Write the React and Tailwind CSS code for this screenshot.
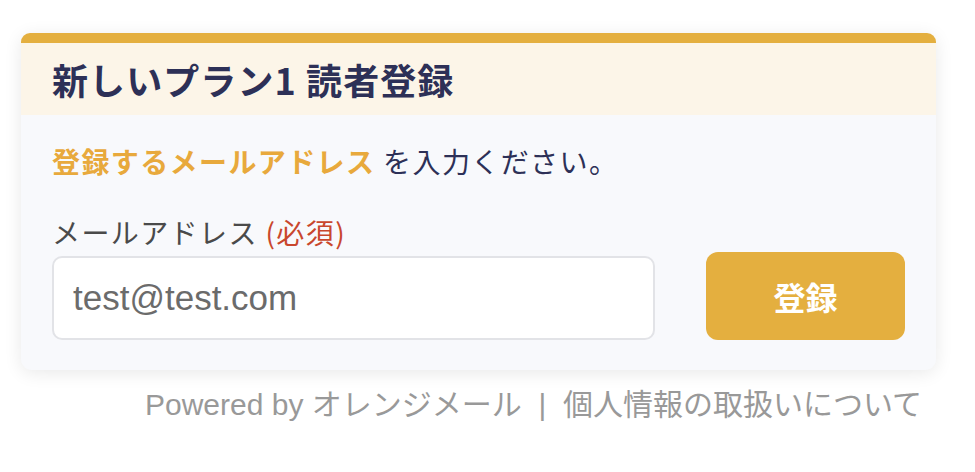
export default function App() {
  const jp = { fontFamily: '"Noto Sans CJK JP", "Noto Sans", sans-serif' };

  return (
    <div className="min-h-screen bg-white pl-[21px] pt-[33px]" style={jp}>
      <div className="w-[915px]">
        <div className="overflow-hidden rounded-t-[9px] rounded-b-[11px] bg-[#f8f9fc] shadow-[0_3px_18px_rgba(0,0,0,0.09)]">
          <div className="h-[10px] bg-[#e4af3f]" />
          <div className="flex h-[72px] items-center bg-[#fcf5e8] px-[31px]">
            <h1 className="text-[36px] font-bold leading-none tracking-[0.03em] text-[#2d3057]">
              新しいプラン1 読者登録
            </h1>
          </div>

          <div className="px-[31px] pb-[30px] pt-[26px]">
            <p className="text-[28px] leading-[40px] tracking-[0.05em] text-[#2d3057]">
              <span className="font-bold text-[#e8a93c]">登録するメールアドレス</span> を入力ください。
            </p>

            <div className="mt-[31px] flex items-end gap-[51px]">
              <div className="flex w-[604px] flex-col">
                <label className="text-[28px] leading-[40px] tracking-[0.05em] text-[#4a4a4a]">
                  メールアドレス <span className="text-[#c9472d]">(必須)</span>
                </label>
                <input
                  type="email"
                  placeholder="test@test.com"
                  className="mt-[4px] h-[84px] w-full rounded-[10px] border-2 border-[#e2e3e7] bg-white px-[19px] text-[35px] text-[#6b6b6b] outline-none placeholder:text-[#6b6b6b]"
                  style={{ fontFamily: '"Liberation Sans", Arial, sans-serif' }}
                />
              </div>
              <button className="h-[88px] w-[199px] rounded-[12px] bg-[#e4af3f] text-[32px] font-bold text-white">
                登録
              </button>
            </div>
          </div>
        </div>

        <p
          className="mt-[15px] pr-[14px] text-right text-[30px] leading-[40px] text-[#999999]"
          style={{ fontFamily: '"Liberation Sans", "Noto Sans CJK JP", sans-serif' }}
        >
          Powered by オレンジメール&nbsp;&nbsp;|&nbsp;&nbsp;個人情報の取扱いについて
        </p>
      </div>
    </div>
  );
}
